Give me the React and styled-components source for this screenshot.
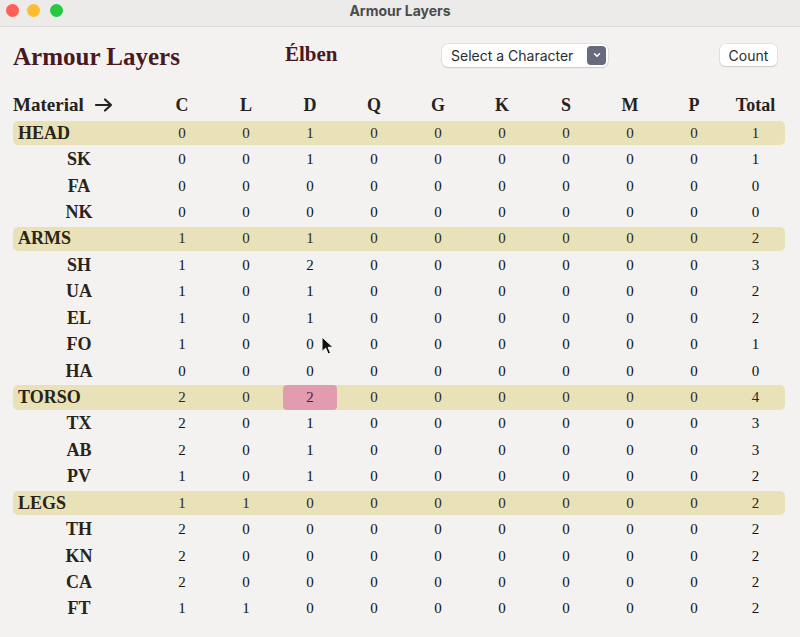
import React from "react";
import styled, { createGlobalStyle } from "styled-components";

const Global = createGlobalStyle`
  html, body { margin: 0; padding: 0; background: #f3f2f0; }
  body { font-family: "Liberation Serif", "DejaVu Serif", serif; }
  * { box-sizing: border-box; }
`;

const Window = styled.div`
  width: 800px;
  height: 637px;
  background: #f3f2f0;
  position: relative;
  overflow: hidden;
`;

const TitleBar = styled.div`
  height: 27px;
  background: #ecebea;
  border-bottom: 1px solid #dddcdb;
  display: flex;
  align-items: flex-start;
  position: relative;
  padding: 4px 0 0 6px;
  gap: 8px;
`;

const Light = styled.span`
  width: 13px;
  height: 13px;
  border-radius: 50%;
  background: ${(p) => p.$c};
  display: block;
  margin-left: ${(p) => p.$ml || 0}px;
`;

const WinTitle = styled.div`
  position: absolute;
  left: 0;
  right: 0;
  top: 2px;
  text-align: center;
  font-family: "Inter", "Liberation Sans", sans-serif;
  font-weight: 700;
  font-size: 14px;
  color: #4b4b4b;
  pointer-events: none;
`;

const Content = styled.div`
  padding: 0 10px 0 13px;
`;

const TopBar = styled.div`
  height: 58px;
  display: flex;
  align-items: center;
  padding-right: 13px;
`;

const Heading = styled.h1`
  margin: 0;
  width: 272px;
  font-size: 25px;
  font-weight: 700;
  color: #4a1820;
  padding-top: 2px;
`;

const CharName = styled.h2`
  margin: 0 0 3px 0;
  width: 157px;
  font-size: 21px;
  font-weight: 700;
  color: #4a1820;
`;

const Select = styled.div`
  width: 166px;
  height: 23px;
  background: #fff;
  border-radius: 6px;
  box-shadow: 0 0 0 0.5px rgba(0, 0, 0, 0.12), 0 1px 1.5px rgba(0, 0, 0, 0.12);
  display: flex;
  align-items: center;
  justify-content: space-between;
  padding: 0 2px 0 9px;
  font-family: "Inter", "Liberation Sans", sans-serif;
  font-size: 14px;
  color: #2c2c2c;
  margin-bottom: 2px;
`;

const Chevron = styled.span`
  width: 19px;
  height: 19px;
  border-radius: 4px;
  background: #686b7e;
  display: flex;
  align-items: center;
  justify-content: center;
`;

const Button = styled.div`
  margin-left: auto;
  width: 57px;
  height: 22px;
  background: #fff;
  border-radius: 5px;
  box-shadow: 0 0 0 0.5px rgba(0, 0, 0, 0.12), 0 1px 1.5px rgba(0, 0, 0, 0.12);
  display: flex;
  align-items: center;
  justify-content: center;
  font-family: "Inter", "Liberation Sans", sans-serif;
  font-size: 14px;
  color: #2c2c2c;
  margin-bottom: 2px;
`;

const Grid = styled.div`
  display: grid;
  grid-template-columns: 137px repeat(9, 64px) 59px;
  width: 772px;
  align-items: center;
`;

const HeaderRow = styled(Grid)`
  height: 35px;
  padding-top: 5px;
`;

const HeadLabel = styled.div`
  font-size: 19px;
  font-weight: 700;
  color: #262220;
  display: flex;
  align-items: center;
  gap: 10px;
`;

const HeadCell = styled.div`
  text-align: center;
  font-size: 18px;
  font-weight: 700;
  color: #262220;
`;

const Row = styled(Grid)`
  height: ${(p) => (p.$group ? 24.4 : 26.44)}px;
  margin: ${(p) => (p.$group ? "1px 0" : "0")};
  background: ${(p) => (p.$group ? "#e9e2b9" : "transparent")};
  border-radius: 5px;
`;

const Label = styled.div`
  font-size: 18px;
  font-weight: 700;
  color: #2a2318;
  text-align: ${(p) => (p.$group ? "left" : "center")};
  padding: ${(p) => (p.$group ? "0 0 0 5px" : "0 5px 0 0")};
`;

const Cell = styled.div`
  text-align: center;
  font-size: 15px;
  color: ${(p) => (p.$hot ? "#5a1a2c" : p.$group ? "#2e2618" : "#111")};
  background: ${(p) => (p.$hot ? "#e39bb0" : "transparent")};
  border-radius: 4px;
  margin: ${(p) => (p.$hot ? "0 5px" : "0")};
  height: ${(p) => (p.$hot ? "25px" : "auto")};
  line-height: ${(p) => (p.$hot ? "25px" : "normal")};
`;

const Cursor = styled.svg`
  position: absolute;
  left: 321px;
  top: 336px;
`;

const cols = ["C", "L", "D", "Q", "G", "K", "S", "M", "P", "Total"];

const rows = [
  { n: "HEAD", g: true, v: [0, 0, 1, 0, 0, 0, 0, 0, 0, 1] },
  { n: "SK", v: [0, 0, 1, 0, 0, 0, 0, 0, 0, 1] },
  { n: "FA", v: [0, 0, 0, 0, 0, 0, 0, 0, 0, 0] },
  { n: "NK", v: [0, 0, 0, 0, 0, 0, 0, 0, 0, 0] },
  { n: "ARMS", g: true, v: [1, 0, 1, 0, 0, 0, 0, 0, 0, 2] },
  { n: "SH", v: [1, 0, 2, 0, 0, 0, 0, 0, 0, 3] },
  { n: "UA", v: [1, 0, 1, 0, 0, 0, 0, 0, 0, 2] },
  { n: "EL", v: [1, 0, 1, 0, 0, 0, 0, 0, 0, 2] },
  { n: "FO", v: [1, 0, 0, 0, 0, 0, 0, 0, 0, 1] },
  { n: "HA", v: [0, 0, 0, 0, 0, 0, 0, 0, 0, 0] },
  { n: "TORSO", g: true, hot: 2, v: [2, 0, 2, 0, 0, 0, 0, 0, 0, 4] },
  { n: "TX", v: [2, 0, 1, 0, 0, 0, 0, 0, 0, 3] },
  { n: "AB", v: [2, 0, 1, 0, 0, 0, 0, 0, 0, 3] },
  { n: "PV", v: [1, 0, 1, 0, 0, 0, 0, 0, 0, 2] },
  { n: "LEGS", g: true, v: [1, 1, 0, 0, 0, 0, 0, 0, 0, 2] },
  { n: "TH", v: [2, 0, 0, 0, 0, 0, 0, 0, 0, 2] },
  { n: "KN", v: [2, 0, 0, 0, 0, 0, 0, 0, 0, 2] },
  { n: "CA", v: [2, 0, 0, 0, 0, 0, 0, 0, 0, 2] },
  { n: "FT", v: [1, 1, 0, 0, 0, 0, 0, 0, 0, 2] },
];

export default function App() {
  return (
    <Window>
      <Global />
      <TitleBar>
        <Light $c="#fe5f57" $ml={0} />
        <Light $c="#febc2e" />
        <Light $c="#28c840" $ml={2} />
        <WinTitle>Armour Layers</WinTitle>
      </TitleBar>
      <Content>
        <TopBar>
          <Heading>Armour Layers</Heading>
          <CharName>Élben</CharName>
          <Select>
            <span>Select a Character</span>
            <Chevron>
              <svg width="10" height="10" viewBox="0 0 10 10">
                <path d="M2.5 3.8 L5 6.3 L7.5 3.8" fill="none" stroke="#fff" strokeWidth="1.5" strokeLinecap="round" strokeLinejoin="round" />
              </svg>
            </Chevron>
          </Select>
          <Button>Count</Button>
        </TopBar>
        <HeaderRow>
          <HeadLabel>
            <span>Material</span>
            <svg width="20" height="16" viewBox="0 0 20 16">
              <path d="M2 8 H17 M11 2.5 L17 8 L11 13.5" fill="none" stroke="#262220" strokeWidth="2.2" strokeLinecap="round" strokeLinejoin="round" />
            </svg>
          </HeadLabel>
          {cols.map((c) => (
            <HeadCell key={c}>{c}</HeadCell>
          ))}
        </HeaderRow>
        {rows.map((r) => (
          <Row key={r.n} $group={r.g}>
            <Label $group={r.g}>{r.n}</Label>
            {r.v.map((x, i) => (
              <Cell key={i} $group={r.g} $hot={r.hot === i}>
                {x}
              </Cell>
            ))}
          </Row>
        ))}
      </Content>
      <Cursor width="14" height="20" viewBox="0 0 14 20">
        <path d="M1 1 L1 15.5 L4.6 12.2 L7.2 18 L9.6 17 L7.1 11.3 L12 11.3 Z" fill="#111" stroke="#fff" strokeWidth="1" strokeLinejoin="round" />
      </Cursor>
    </Window>
  );
}
